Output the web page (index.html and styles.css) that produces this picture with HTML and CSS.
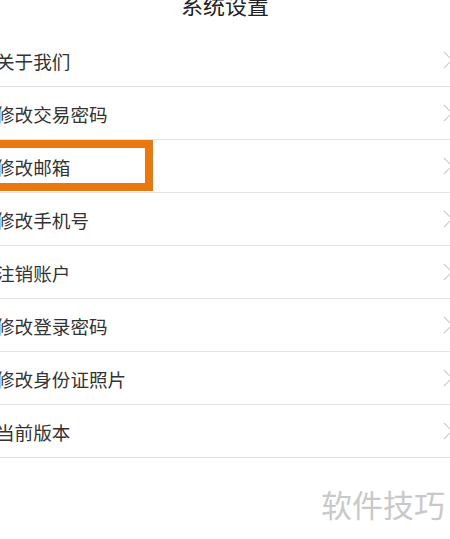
FILE: index.html
```html
<!DOCTYPE html>
<html lang="zh-CN">
<head>
  <meta charset="UTF-8">
  <meta name="viewport" content="width=device-width, initial-scale=1.0">
  <title>系统设置</title>
  <link rel="stylesheet" href="styles.css">
</head>
<body>
  <header class="top-bar">
    <h1 class="title">系统设置</h1>
  </header>

  <ul class="menu">
    <li class="menu-item"><span class="label">关于我们</span><svg class="arrow" viewBox="0 0 10 18"><path d="M1 1 L9 9 L1 17"/></svg></li>
    <li class="menu-item"><span class="label">修改交易密码</span><svg class="arrow" viewBox="0 0 10 18"><path d="M1 1 L9 9 L1 17"/></svg></li>
    <li class="menu-item">
      <span class="label">修改邮箱</span><svg class="arrow" viewBox="0 0 10 18"><path d="M1 1 L9 9 L1 17"/></svg>
      <div class="highlight"></div>
    </li>
    <li class="menu-item"><span class="label">修改手机号</span><svg class="arrow" viewBox="0 0 10 18"><path d="M1 1 L9 9 L1 17"/></svg></li>
    <li class="menu-item"><span class="label">注销账户</span><svg class="arrow" viewBox="0 0 10 18"><path d="M1 1 L9 9 L1 17"/></svg></li>
    <li class="menu-item"><span class="label">修改登录密码</span><svg class="arrow" viewBox="0 0 10 18"><path d="M1 1 L9 9 L1 17"/></svg></li>
    <li class="menu-item"><span class="label">修改身份证照片</span><svg class="arrow" viewBox="0 0 10 18"><path d="M1 1 L9 9 L1 17"/></svg></li>
    <li class="menu-item"><span class="label">当前版本</span><svg class="arrow" viewBox="0 0 10 18"><path d="M1 1 L9 9 L1 17"/></svg></li>
  </ul>

  <div class="watermark">软件技巧</div>
</body>
</html>
```

FILE: styles.css
```css
:root {
  --text-color: #333333;
  --line-color: #e3e3e3;
  --accent: #e8780f;
}
html, body {
  margin: 0;
  padding: 0;
  background: #ffffff;
  overflow: hidden;
}
body {
  width: 450px;
  height: 539px;
  font-family: "Noto Sans CJK SC", "Noto Sans", sans-serif;
  color: var(--text-color);
}
.top-bar {
  display: flow-root;
  height: 34px;
}
.title {
  margin: -7px 0 0;
  font-size: 22px;
  line-height: 22px;
  font-weight: normal;
  text-align: center;
  color: #222;
}
.menu {
  list-style: none;
  margin: 0;
  padding: 0;
}
.menu-item {
  position: relative;
  height: 52px;
  display: flex;
  align-items: center;
  justify-content: space-between;
  border-bottom: 1px solid var(--line-color);
  font-size: 18.6px;
}
.label {
  margin-left: -4px;
}
.arrow {
  width: 10px;
  height: 18px;
  margin-right: -3px;
  fill: none;
  stroke: #cccccc;
  stroke-width: 1.1;
}
.highlight {
  position: absolute;
  top: 0;
  left: -12px;
  width: 149px;
  height: 35px;
  border: 8px solid var(--accent);
}
.watermark {
  margin-top: 30px;
  padding-right: 5px;
  text-align: right;
  font-size: 31px;
  line-height: 31px;
  color: #c9c9c9;
}
```
